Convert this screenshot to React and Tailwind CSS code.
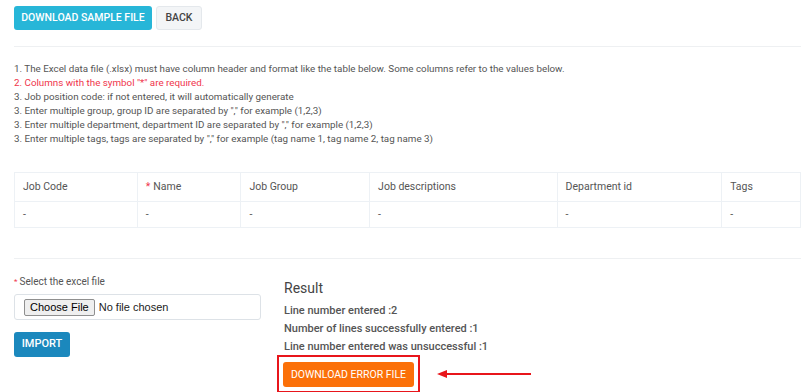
const columns = [
  { label: 'Job Code', w: 'w-[122px]' },
  { label: 'Name', w: 'w-[104px]', required: true },
  { label: 'Job Group', w: 'w-[129px]' },
  { label: 'Job descriptions', w: 'w-[188px]' },
  { label: 'Department id', w: 'w-[165px]' },
  { label: 'Tags', w: 'w-[79px]' },
];

const notes = [
  '1. The Excel data file (.xlsx) must have column header and format like the table below. Some columns refer to the values below.',
  '2. Columns with the symbol "*" are required.',
  '3. Job position code: if not entered, it will automatically generate',
  '3. Enter multiple group, group ID are separated by "," for example (1,2,3)',
  '3. Enter multiple department, department ID are separated by "," for example (1,2,3)',
  '3. Enter multiple tags, tags are separated by "," for example (tag name 1, tag name 2, tag name 3)',
];

export default function App() {
  return (
    <div className="w-[808px] h-[392px] overflow-hidden bg-white font-['Roboto',sans-serif] text-[#555] pl-[14px] pr-[7px] pt-[6px]">
      {/* Top actions */}
      <div className="flex gap-[4px]">
        <button className="h-[24px] w-[138px] rounded-[3px] bg-[#27b6d8] text-white text-[10.5px] font-medium">
          DOWNLOAD SAMPLE FILE
        </button>
        <button className="h-[24px] w-[46px] rounded-[3px] bg-[#f3f5f7] border border-[#e4e8ec] text-[#444] text-[10.5px] font-medium">
          BACK
        </button>
      </div>

      <div className="mt-[16px] border-t border-[#eef0f2]" />

      {/* Instructions */}
      <div className="mt-[15px] text-[9.8px] leading-[14px]">
        {notes.map((n, i) => (
          <div key={i} className={i === 1 ? 'text-[#f0354c]' : ''}>{n}</div>
        ))}
      </div>

      {/* Sample table */}
      <div className="mt-[26px] w-[787px] border border-[#edf1f5] text-[10.5px]">
        <div className="flex h-[29px] border-b border-[#edf1f5]">
          {columns.map((c, i) => (
            <div key={c.label} className={`${c.w} flex items-center pl-[8px] ${i > 0 ? 'border-l border-[#edf1f5]' : ''}`}>
              {c.required && <span className="text-[#f0354c] mr-[3px]">*</span>}
              {c.label}
            </div>
          ))}
        </div>
        <div className="flex h-[25px]">
          {columns.map((c, i) => (
            <div key={c.label} className={`${c.w} flex items-center pl-[8px] ${i > 0 ? 'border-l border-[#edf1f5]' : ''}`}>
              -
            </div>
          ))}
        </div>
      </div>

      <div className="mt-[30px] w-[787px] border-t border-[#eef0f2]" />

      {/* Import + result */}
      <div className="flex mt-[16px]">
        <div className="w-[247px]">
          <div className="text-[10px] leading-[14px] flex items-center">
            <span className="text-[#f0354c] text-[8px] mr-[2px]">*</span>
            Select the excel file
          </div>
          <div className="mt-[5px] h-[26px] border border-[#dde2e7] rounded-[3px] flex items-center pl-[9px] gap-[4px]">
            <span className="h-[17px] px-[5px] border border-[#8f8f8f] bg-[#efefef] rounded-[2px] text-[11px] text-black flex items-center font-['Liberation_Sans',sans-serif]">
              Choose File
            </span>
            <span className="text-[11px] text-[#222] font-['Liberation_Sans',sans-serif]">No file chosen</span>
          </div>
          <button className="mt-[12px] h-[25px] w-[56px] rounded-[3px] bg-[#1b88bd] text-white text-[11px] font-medium">
            IMPORT
          </button>
        </div>

        <div className="ml-[23px] pt-[4px]">
          <div className="text-[14px] leading-[18px] text-[#444]">Result</div>
          <div className="mt-[7px] flex flex-col gap-[4px] text-[11px] leading-[14px] font-medium text-[#555]">
            <div>Line number entered :2</div>
            <div>Number of lines successfully entered :1</div>
            <div>Line number entered was unsuccessful :1</div>
          </div>
          <div className="flex items-center mt-[1px]">
            <div className="-ml-[7px] border-2 border-[#e8151b] p-[4px]">
              <button className="h-[25px] w-[131px] rounded-[3px] bg-[#fb7008] text-white text-[10.5px]">
                DOWNLOAD ERROR FILE
              </button>
            </div>
            <svg width="96" height="10" viewBox="0 0 96 10" className="ml-[17px]">
              <line x1="8" y1="5" x2="94" y2="5" stroke="#e8151b" strokeWidth="2" />
              <polygon points="0,5 10,1 10,9" fill="#e8151b" />
            </svg>
          </div>
        </div>
      </div>
    </div>
  );
}
